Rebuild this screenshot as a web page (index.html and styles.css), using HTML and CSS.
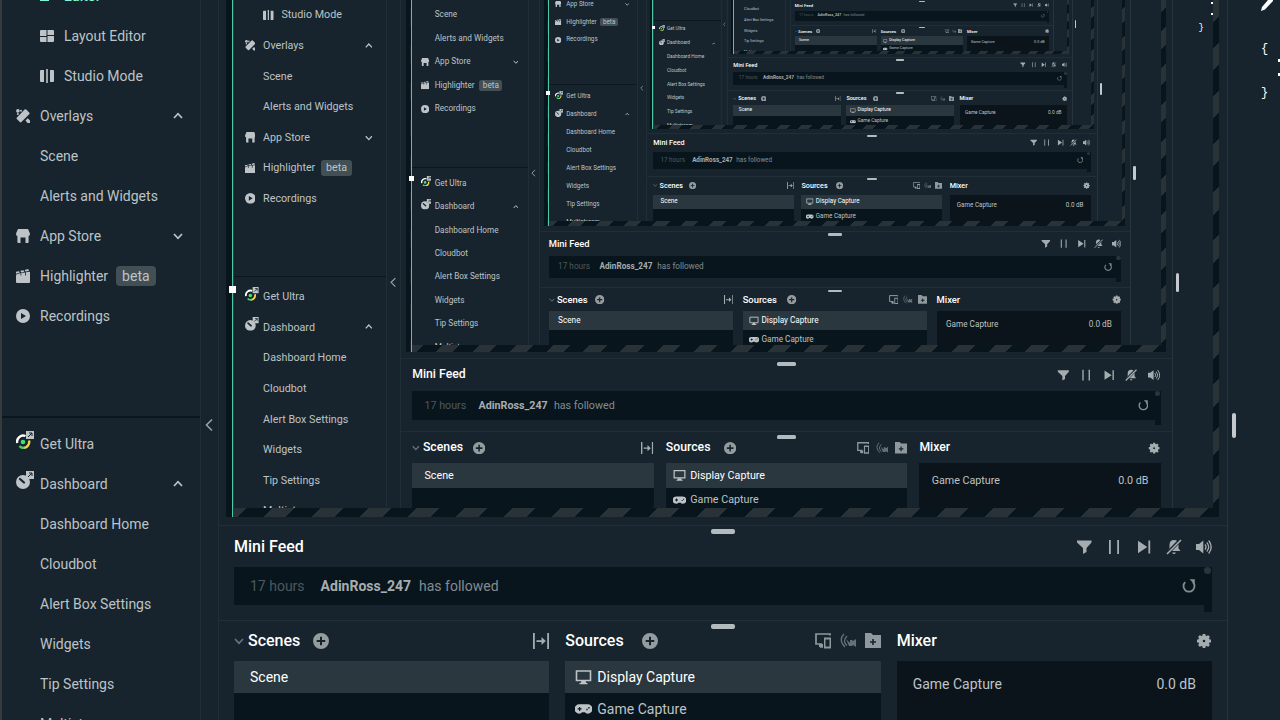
FILE: index.html
```html
<!DOCTYPE html>
<html lang="en">
<head>
<meta charset="utf-8">
<meta name="viewport" content="width=device-width, initial-scale=1">
<title>Editor</title>
<link rel="stylesheet" href="styles.css">
</head>
<body>
<svg class="sprite" aria-hidden="true">
  <symbol id="i-camera" viewBox="0 0 14 14"><path d="M0 2h9v10H0zM10 6l4-3v8l-4-3z"/></symbol>
  <symbol id="i-grid" viewBox="0 0 14 14"><path d="M1 1h5.500v6H0V2q0-1 1-1zM7.500 1H13q1 0 1 1v4H7.500zM0 8h6.500v5H1q-1 0-1-1zM7.500 7H14v5q0 1-1 1H7.500z"/></symbol>
  <symbol id="i-studio" viewBox="0 0 14 14"><path d="M1 1h3v12H1q-1 0-1-1V2q0-1 1-1zM6.200 0h1.600v14H6.200zM10 1h3q1 0 1 1v10q0 1-1 1h-3z"/></symbol>
  <symbol id="i-overlays" viewBox="0 0 14 14"><path d="M8.600.6q.8-.8 1.600 0l3 3q.8.800 0 1.600L5.400 13q-.8.800-1.600 0L.9 10q-.8-.8 0-1.600z"/><circle cx="1.900" cy="1.900" r="1.800"/><circle cx="5" cy="1.800" r="1"/><circle cx="1.800" cy="5" r="1"/><path d="m9.500 11.500 2.300-2.300L14 11.500V14h-2.500z"/></symbol>
  <symbol id="i-store" viewBox="0 0 14 14"><path d="M2 0h10l2 4.500Q14 7 12.600 7v6q0 1-1 1H9.500V8.500h-5V14H2.400q-1 0-1-1V7Q0 7 0 4.500z"/></symbol>
  <symbol id="i-clap" viewBox="0 0 14 14"><path d="M0 6.500h14V13q0 1-1 1H1q-1 0-1-1zM0 2.800l3-.6.8 1.200L0 4.800zM4.300 1.800l3.200-.6.9 1.500-3.300.7zM8.700 1l3.500-.9.8 2-3.600.5zM.2 5.500 4.500 4v2.600H.2zM5.300 4 9 3.400v3.200H5.300zM9.800 3.300 14 2.800v3.800H9.800z"/></symbol>
  <symbol id="i-play" viewBox="0 0 14 14"><path fill-rule="evenodd" d="M7 0a7 7 0 1 1 0 14A7 7 0 0 1 7 0zM5 4v6l5-3z"/></symbol>
  <symbol id="i-ultra" viewBox="0 0 18 18"><path d="M1.200 12a6.200 6.200 0 0 1 8.300-7" fill="none" stroke="#fff" stroke-width="2.400"/><path d="M13 9.500A6 6 0 0 1 7.500 17" fill="none" stroke="#f5d547" stroke-width="2.400"/><path d="M8.500 17a6 6 0 0 1-5-2" fill="none" stroke="#4fd16c" stroke-width="2.400"/><circle cx="7" cy="11" r="2.300" fill="#3fe07a"/><path d="M10 0h8v8h-8z"/><path d="M12 6l4-4M13 2h3v3" fill="none" stroke="#17242d"/></symbol>
  <symbol id="i-dash" viewBox="0 0 18 18"><circle cx="7" cy="11" r="7"/><path d="m4 8 4 3.500" stroke="#17242d" stroke-width="2.200" stroke-linecap="round"/><path d="M10 0h8v8h-8z"/><path d="M12 6l4-4M13 2h3v3" fill="none" stroke="#17242d"/></symbol>
  <symbol id="i-up" viewBox="0 0 10 10"><path d="m1 7 4-4.300L9 7" fill="none" stroke="currentColor" stroke-width="1.700"/></symbol>
  <symbol id="i-down" viewBox="0 0 10 10"><path d="m1 3 4 4.300L9 3" fill="none" stroke="currentColor" stroke-width="1.700"/></symbol>
  <symbol id="i-left" viewBox="0 0 8 14"><path d="M7 1.500 1.500 7 7 12.500" fill="none" stroke="currentColor" stroke-width="1.600"/></symbol>
  <symbol id="i-filter" viewBox="0 0 16 16"><path d="M1 1.500h14.500v2L10.500 9v4l-3.500 2V9L1 3.500z"/></symbol>
  <symbol id="i-pause" viewBox="0 0 16 16"><path d="M3 1h1.800v14H3zM11.200 1H13v14h-1.800z"/></symbol>
  <symbol id="i-skip" viewBox="0 0 16 16"><path d="m2 1.800 9.300 6.200L2 14.200zM12.400 1.500h1.800v13h-1.800z"/></symbol>
  <symbol id="i-bell" viewBox="0 0 16 16"><path d="M8 1q4.500 0 4.500 5v3.500l2 2.500h-13l2-2.500V6Q3.500 1 8 1zM6.200 13.500h3.600Q9.500 15 8 15t-1.800-1.500z"/><path d="M0 15.500 15 .5" stroke="#17242d" stroke-width="3.600"/><path d="M1 15 15 1" stroke="currentColor" stroke-width="1.600"/></symbol>
  <symbol id="i-sound" viewBox="0 0 16 16"><path d="M0 5h3l4.300-3.500v13L3 11H0z"/><path d="M9 5.500q2 2.500 0 5M10.800 3.500q3.800 4.500 0 9M12.700 1.500q5 6.500 0 13" fill="none" stroke="currentColor" stroke-width="1.300"/></symbol>
  <symbol id="i-replay" viewBox="0 0 14 14"><path d="M3.200 3.200a5.500 5.500 0 1 0 7.600 0" fill="none" stroke="currentColor" stroke-width="1.800"/><path d="M7.500.3h5.300v5.300z"/></symbol>
  <symbol id="i-plus" viewBox="0 0 16 16"><path fill-rule="evenodd" d="M8 0a8 8 0 1 1 0 16A8 8 0 0 1 8 0zM7 3.700V7H3.700v2H7v3.300h2V9h3.300V7H9V3.700z"/></symbol>
  <symbol id="i-split" viewBox="0 0 16 16"><path d="M0 0h1.800v16H0zM14.200 0H16v16h-1.800zM3.500 7.200h5V4l4.300 4-4.300 4V8.900h-5z"/></symbol>
  <symbol id="i-devices" viewBox="0 0 16 16"><path d="M15 2.500V1H1v10h6M5 14h3" fill="none" stroke="currentColor" stroke-width="1.700"/><path d="M4 11h4v3H4zM9 4.500h7v11H9zm1.500 2v7h4v-7z" fill-rule="evenodd"/></symbol>
  <symbol id="i-cam" viewBox="0 0 16 16"><path d="M4 1q-6 6 1 13M7 3Q2 8 7 12.500" fill="none" stroke="currentColor" stroke-width="1.300"/><path d="m6 6 4 4V7h2l1 1 3-2v8l-3-2-1 1H9z"/></symbol>
  <symbol id="i-folder" viewBox="0 0 16 16"><path fill-rule="evenodd" d="M0 0h6l2 2h8v13H0zM7.200 6v2.300H5v1.500h2.200V12h1.600V9.800H11V8.300H8.800V6z"/></symbol>
  <symbol id="i-gear" viewBox="0 0 16 16"><circle cx="8" cy="8" r="3.500" fill="none" stroke="currentColor" stroke-width="4.400"/><path d="M8 1v3M8 12v3M1 8h3M12 8h3M3 3l2 2M11 11l2 2M3 13l2-2M11 5l2-2" stroke="currentColor" stroke-width="2.800"/></symbol>
  <symbol id="i-screen" viewBox="0 0 16 16"><path d="M1 2h14v9.500H1z" fill="none" stroke="currentColor" stroke-width="1.600"/><path d="M6 12h4l.8 2H12v1.200H4V14h1.200z"/></symbol>
  <symbol id="i-pad" viewBox="0 0 18 16"><path fill-rule="evenodd" d="M4.500 3h9a5 5 0 0 1 0 10Q11.500 13 10.500 11.500h-3Q6.500 13 4.500 13a5 5 0 0 1 0-10zM4.300 5.800v1.500H2.800v1.200h1.500V10h1.200V8.500H7V7.300H5.500V5.800zM12 7.800h1.400v1.400H12zM14 6h1.400v1.400H14z"/></symbol>
  <symbol id="i-pen" viewBox="0 0 12 12"><path d="M7 0h5v1L4 9.500 0 11l1-4z"/></symbol>
</svg>

<div class="screen">
  <nav class="sidebar" aria-label="Main">
    <ul class="nav nav-top">
      <li><a class="item sub active" href="#"><svg class="ico"><use href="#i-camera"/></svg>Editor</a></li>
      <li><a class="item sub" href="#"><svg class="ico"><use href="#i-grid"/></svg>Layout Editor</a></li>
      <li><a class="item sub" href="#"><svg class="ico"><use href="#i-studio"/></svg>Studio Mode</a></li>
      <li><a class="item" href="#"><svg class="ico"><use href="#i-overlays"/></svg>Overlays<svg class="caret"><use href="#i-up"/></svg></a></li>
      <li><a class="item sub" href="#">Scene</a></li>
      <li><a class="item sub" href="#">Alerts and Widgets</a></li>
      <li><a class="item" href="#"><svg class="ico"><use href="#i-store"/></svg>App Store<svg class="caret"><use href="#i-down"/></svg></a></li>
      <li><a class="item" href="#"><svg class="ico"><use href="#i-clap"/></svg>Highlighter<span class="badge">beta</span></a></li>
      <li><a class="item" href="#"><svg class="ico"><use href="#i-play"/></svg>Recordings</a></li>
    </ul>
    <ul class="nav nav-bottom">
      <li><a class="item" href="#"><svg class="ico linked"><use href="#i-ultra"/></svg>Get Ultra</a></li>
      <li><a class="item" href="#"><svg class="ico linked"><use href="#i-dash"/></svg>Dashboard<svg class="caret"><use href="#i-up"/></svg></a></li>
      <li><a class="item sub" href="#">Dashboard Home</a></li>
      <li><a class="item sub" href="#">Cloudbot</a></li>
      <li><a class="item sub" href="#">Alert Box Settings</a></li>
      <li><a class="item sub" href="#">Widgets</a></li>
      <li><a class="item sub" href="#">Tip Settings</a></li>
      <li><a class="item sub" href="#">Multistream</a></li>
    </ul>
  </nav>
  <button class="collapse" aria-label="Collapse sidebar"><svg><use href="#i-left"/></svg></button>

  <main class="main">
    <div class="stage">
      <div class="source"><div class="selection"></div></div>
    </div>

    <section class="panel feed">
      <span class="grip"></span>
      <header class="bar">
        <h2>Mini Feed</h2>
        <div class="tools wide">
          <button class="tool" aria-label="Filter"><svg><use href="#i-filter"/></svg></button>
          <button class="tool" aria-label="Pause"><svg><use href="#i-pause"/></svg></button>
          <button class="tool" aria-label="Skip"><svg><use href="#i-skip"/></svg></button>
          <button class="tool" aria-label="Mute alerts"><svg><use href="#i-bell"/></svg></button>
          <button class="tool" aria-label="Volume"><svg><use href="#i-sound"/></svg></button>
        </div>
      </header>
      <div class="event">
        <span class="ago">17 hours</span>
        <strong>AdinRoss_247</strong>
        <span class="what">has followed</span>
        <button class="replay" aria-label="Replay"><svg><use href="#i-replay"/></svg></button>
        <span class="track"></span>
      </div>
    </section>

    <section class="panel columns">
      <span class="grip"></span>
      <div class="col">
        <header class="bar">
          <svg class="tree"><use href="#i-down"/></svg>
          <h2>Scenes</h2>
          <button class="tool add" aria-label="Add scene"><svg><use href="#i-plus"/></svg></button>
          <div class="tools"><button class="tool" aria-label="Transitions"><svg><use href="#i-split"/></svg></button></div>
        </header>
        <ul class="list scenes"><li class="row on">Scene</li></ul>
      </div>
      <div class="col">
        <header class="bar">
          <h2>Sources</h2>
          <button class="tool add far" aria-label="Add source"><svg><use href="#i-plus"/></svg></button>
          <div class="tools dim">
            <button class="tool" aria-label="Dual output"><svg><use href="#i-devices"/></svg></button>
            <button class="tool faint" aria-label="Selective recording"><svg><use href="#i-cam"/></svg></button>
            <button class="tool" aria-label="Add folder"><svg><use href="#i-folder"/></svg></button>
          </div>
        </header>
        <ul class="list sources">
          <li class="row on"><svg><use href="#i-screen"/></svg>Display Capture</li>
          <li class="row"><svg><use href="#i-pad"/></svg>Game Capture</li>
        </ul>
      </div>
      <div class="col">
        <header class="bar">
          <h2>Mixer</h2>
          <div class="tools"><button class="tool" aria-label="Mixer settings"><svg><use href="#i-gear"/></svg></button></div>
        </header>
        <div class="list mixer"><span>Game Capture</span><span>0.0 dB</span></div>
      </div>
    </section>
  </main>

  <aside class="side">
    <svg class="pen"><use href="#i-pen"/></svg>
    <pre class="code">{

}</pre>
    <span class="dots"></span>
    <span class="thumb"></span>
  </aside>
</div>
<script src="preview.js"></script>
</body>
</html>
```

FILE: styles.css
```css
* { box-sizing: border-box; }

body {
  margin: 0;
  background: #17242d;
  overflow: hidden;
}

.sprite { position: absolute; width: 0; height: 0; }

svg { display: block; flex: none; fill: currentColor; }

button {
  display: block;
  padding: 0;
  border: 0;
  background: none;
  color: inherit;
  font: inherit;
}

ul { margin: 0; padding: 0; list-style: none; }

.screen {
  display: flex;
  width: 100%;
  height: 100vh;
  overflow: hidden;
  background: #17242d;
  color: #bdc3c6;
  font: 14px/20px Roboto, "Liberation Sans", sans-serif;
}

/* sidebar */
.sidebar {
  display: flex;
  flex-direction: column;
  flex: 0 0 201px;
  min-width: 0;
  border-left: 2px solid #383b3e;
  border-right: 1px solid #202e36;
}

.nav-top { flex: 1; min-height: 0; margin-top: -24px; }

.nav-bottom {
  flex: none;
  margin-bottom: -24px;
  padding-top: 6px;
  border-top: 2px solid #0b171e;
}

.item {
  display: flex;
  align-items: center;
  gap: 10px;
  height: 40px;
  padding: 0 17px 0 14px;
  color: inherit;
  text-decoration: none;
  white-space: nowrap;
}

.item.sub { padding-left: 38px; }
.item.active { color: #80f5d2; font-weight: 500; }
.ico { width: 14px; height: 14px; }
.ico.linked { width: 18px; height: 18px; margin: -8px -4px 0 0; }
.caret { width: 10px; height: 10px; margin-left: auto; }

.badge {
  margin-left: -2px;
  padding: 0 6px;
  border-radius: 4px;
  background: #425055;
}

.collapse {
  display: flex;
  flex: 0 0 18px;
  align-items: center;
  justify-content: center;
  padding: 130px 2px 0 0;
  border-right: 1px solid #202e36;
  color: #9aa2a6;
}

.collapse svg { width: 8px; height: 14px; }

/* preview stage */
.main {
  display: flex;
  flex-direction: column;
  flex: 1;
  min-width: 0;
  border-right: 1px solid #26343b;
}

.stage {
  display: flex;
  flex: 1;
  align-items: flex-end;
  min-height: 0;
  margin: 0 8px 8px 7px;
  padding: 0 6px 9px 7px;
  overflow: hidden;
  background:
    linear-gradient(#09151c, #09151c) left / 6px 100% no-repeat,
    repeating-linear-gradient(135deg, #09151c 0 18px, #293236 18px 34px);
}

.source { position: relative; flex: 1; min-width: 0; }

.source .screen {
  height: auto;
  aspect-ratio: 16 / 9;
  zoom: 0.766;
}

.selection {
  position: absolute;
  z-index: 1;
  inset: 0 0 -9px -1px;
  border-left: 1px solid #4fc7a3;
}

.selection::before {
  content: "";
  position: absolute;
  top: 59%;
  left: -4px;
  width: 7px;
  height: 7px;
  margin-top: -1px;
  background: #fff;
}

/* panels */
.panel {
  position: relative;
  flex: none;
  padding: 0 15px;
  border-top: 1px solid #202e36;
}

.grip {
  position: absolute;
  top: 3px;
  left: 50%;
  width: 24px;
  height: 5px;
  margin-left: -12px;
  border-radius: 2px;
  background: #b4bbbf;
}

.bar { display: flex; flex: none; align-items: center; height: 40px; }

h2 {
  margin: 0;
  color: #fff;
  font-size: 16px;
  font-weight: 500;
  line-height: 20px;
  white-space: nowrap;
}

.tools { display: flex; gap: 9px; margin-left: auto; color: #a5acb0; }
.tools.wide { gap: 14px; }
.tools.dim { color: #8f989c; }
.tool svg { width: 16px; height: 16px; }
.tool.faint { color: #667177; }
.tool.add { margin-left: 13px; color: #949c9f; }
.tool.add.far { margin-left: 18px; }
.tree { width: 10px; height: 10px; margin-right: 4px; color: #6a757b; }

.feed { padding-bottom: 15px; }
.feed .bar { height: 41px; }

.event {
  position: relative;
  display: flex;
  align-items: center;
  height: 38px;
  padding: 0 16px;
  background: #09151c;
  color: #838c91;
  white-space: nowrap;
}

.event .ago { margin-right: 16px; color: #4d595f; }
.event strong { margin-right: 8px; color: #a6adb0; font-weight: 700; }
.replay { margin-left: auto; }
.replay svg { width: 14px; height: 14px; }

.track {
  position: absolute;
  top: 0;
  right: 0;
  width: 8px;
  height: 45px;
  background: #09151c;
}

.track::before {
  content: "";
  display: block;
  width: 7px;
  height: 7px;
  border-radius: 50%;
  background: #2a353b;
}

.columns { display: flex; flex: 0 0 100px; gap: 16px; min-height: 0; }
.col { display: flex; flex: 1; flex-direction: column; min-width: 0; min-height: 0; }
.list { flex: 1; min-height: 0; overflow: hidden; background: #09151c; white-space: nowrap; }
.row { display: flex; align-items: center; gap: 5px; height: 32px; padding: 0 16px; }
.sources .row { padding-left: 10px; }
.sources svg { width: 17px; height: 16px; color: #bdc3c6; }
.row.on { background: #2b373e; color: #fff; }

.mixer {
  display: flex;
  justify-content: space-between;
  padding: 13px 16px;
  background: #0b141a;
}

/* code editor edge */
.side { position: relative; flex: 0 0 52px; color: #fff; }
.pen { position: absolute; top: 0; left: 33px; width: 12px; height: 12px; }

.code {
  margin: 0;
  padding: 38px 0 0 33px;
  font: 12px/22px "Liberation Mono", monospace;
}

.dots {
  position: absolute;
  top: 59px;
  right: 0;
  width: 2px;
  height: 17px;
  border: solid #fff;
  border-width: 3px 0;
}

.thumb {
  position: absolute;
  top: 57%;
  left: 4px;
  width: 4px;
  height: 25px;
  margin-top: 3px;
  border-radius: 2px;
  background: #c3c9cc;
}
```

FILE: preview.js
```js
// The captured display contains the editor itself, so each preview holds a smaller copy.
const DEPTH = 6;
const root = document.querySelector(".screen");
const blank = root.cloneNode(true);
blank.inert = true;

let inner = null;
for (let i = 0; i < DEPTH; i++) {
  const copy = blank.cloneNode(true);
  if (inner) copy.querySelector(".source").append(inner);
  inner = copy;
}
root.querySelector(".source").append(inner);
```
